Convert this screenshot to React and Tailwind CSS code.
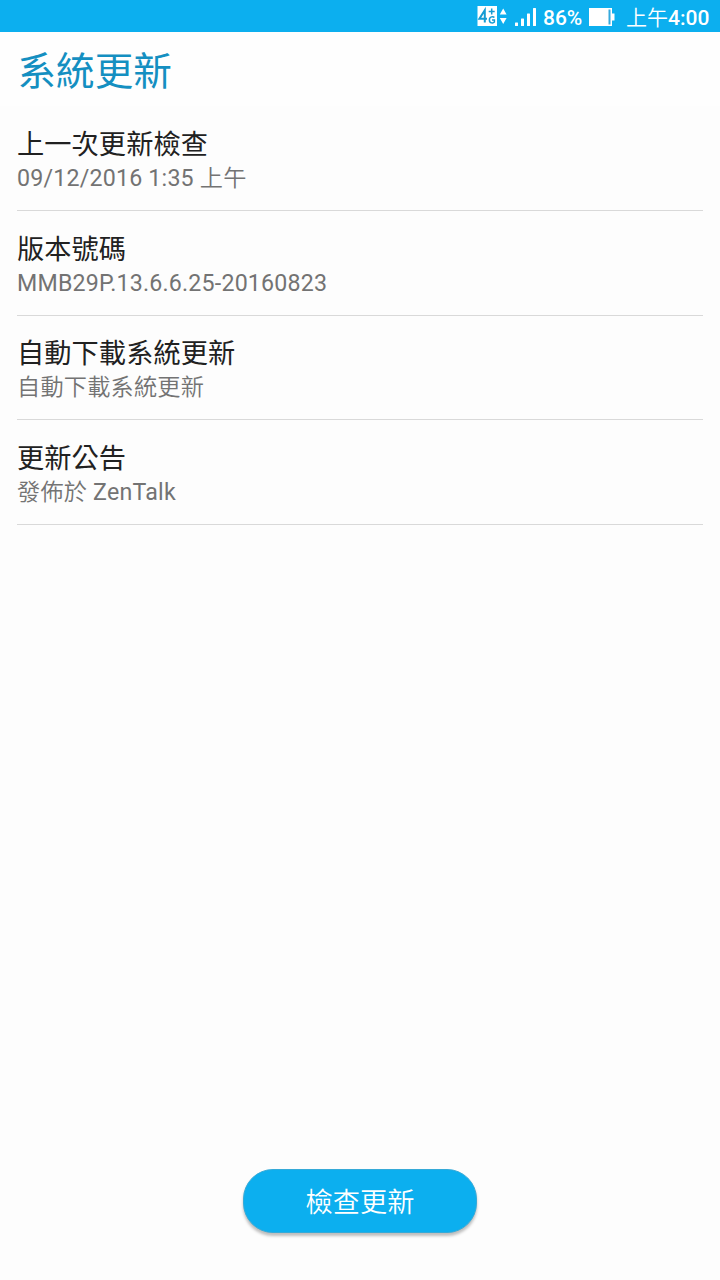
import React from 'react';

const ITEMS = [
  { title: '上一次更新檢查', detail: '09/12/2016 1:35 上午' },
  { title: '版本號碼', detail: 'MMB29P.13.6.6.25-20160823' },
  { title: '自動下載系統更新', detail: '自動下載系統更新' },
  { title: '更新公告', detail: '發佈於 ZenTalk' },
];

function NetworkIcon() {
  return (
    <svg className="w-[32px] h-[22px] shrink-0" viewBox="0 0 32 22" fill="none">
      <rect x="1.5" y="1" width="19.5" height="20" fill="#fff" />
      <g stroke="#149bd3">
        <path d="M8.8 17.5V5.2L3.4 13.8H11" strokeWidth="2" />
        <path d="M15.7 3.5v6M12.7 6.5h6" strokeWidth="1.5" />
        <path d="M18.4 12.6c-1-1.2-5-1.5-5 2.3s4 3.4 5 2.2v-2h-2.4" strokeWidth="1.5" />
      </g>
      <path d="M23.8 9.5L27.2 3.5L30.6 9.5ZM23.8 13H30.6L27.2 19Z" fill="#fff" />
    </svg>
  );
}

function SignalIcon() {
  return (
    <svg className="w-[22px] h-[20px] shrink-0" viewBox="0 0 22 20" fill="#fff">
      <rect x="0" y="15.5" width="3" height="3.5" rx="0.5" />
      <rect x="6" y="11.5" width="3" height="7.5" rx="0.5" />
      <rect x="12" y="6.5" width="3" height="12.5" rx="0.5" />
      <rect x="18" y="1" width="3" height="18" rx="0.5" />
    </svg>
  );
}

function BatteryIcon() {
  return (
    <svg className="w-[26px] h-[20px] shrink-0" viewBox="0 0 26 20">
      <path d="M0 1H23V6.5H25.5V13.5H23V19H0Z" fill="#fff" />
      <rect x="19.5" y="2.5" width="2" height="15" fill="#35a9dd" />
    </svg>
  );
}

function StatusBar() {
  return (
    <div className="h-8 shrink-0 flex items-center bg-[#0cafef] pl-[476px] text-white text-[21px] font-medium leading-8 whitespace-nowrap">
      <NetworkIcon />
      <span className="ml-[7px] pt-[2px] flex"><SignalIcon /></span>
      <span className="ml-[6px] w-[39px] pt-[3px]">86%</span>
      <span className="ml-[7px] pt-px flex"><BatteryIcon /></span>
      <span className="ml-[11px] pt-[3px] flex">
        <span className="font-[350]">上午</span>
        <span>4:00</span>
      </span>
    </div>
  );
}

function Item({ title, detail }) {
  return (
    <div className="h-[104.7px] shrink-0 border-b border-[#d9d9d9] pt-[20.7px]">
      <p className="text-[27.2px] leading-[36px] tracking-[0.1px] text-[#212121] font-normal">{title}</p>
      <p className="-mt-px text-[23.2px] leading-[32px] tracking-[0.2px] text-[#737373]">
        {detail.split(/([\u4e00-\u9fff]+)/).map((part, i) => (
          <span key={i} className={i % 2 ? 'font-[350]' : 'font-normal'}>{part}</span>
        ))}
      </p>
    </div>
  );
}

export default function App() {
  return (
    <div className="w-[720px] h-[1280px] flex flex-col overflow-hidden bg-[#fdfdfd] font-[Roboto,'Noto_Sans_CJK_TC',sans-serif]">
      <StatusBar />

      <header className="h-[74.3px] shrink-0 px-[17.5px] pt-[12px] bg-[#fefefe]">
        <h1 className="text-[38.6px] leading-[56px] text-[#148fc1] font-normal">系統更新</h1>
      </header>

      <main className="flex-1 flex flex-col px-[17px]">
        {ITEMS.map((item) => (
          <Item key={item.title} title={item.title} detail={item.detail} />
        ))}
      </main>

      <footer className="flex justify-center pb-[47px]">
        <button className="w-[234px] h-[64px] pt-[5px] rounded-[30px] bg-[#0cafef] text-white text-[27.2px] leading-none border border-[#35aad8] shadow-[0_3px_3px_rgba(0,0,0,0.25)] font-[350]">
          檢查更新
        </button>
      </footer>
    </div>
  );
}
